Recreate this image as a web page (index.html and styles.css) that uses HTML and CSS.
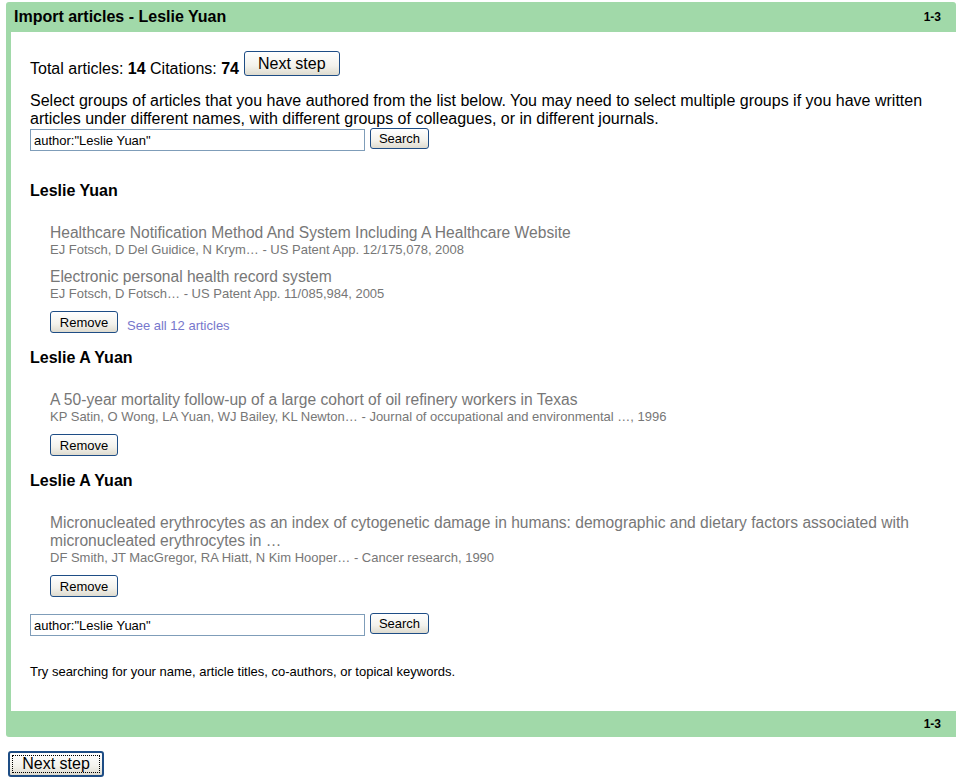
FILE: index.html
```html
<!DOCTYPE html>
<html lang="en">
<head>
    <meta charset="UTF-8">
    <title>Import articles - Leslie Yuan</title>
    <link rel="stylesheet" href="styles.css">
</head>
<body>
    <div class="panel">
        <div class="panel-bar panel-head">
            <span class="panel-title">Import articles - Leslie Yuan</span>
            <span class="panel-range">1-3</span>
        </div>

        <div class="panel-body">
            <div class="totals">
                <span>Total articles: <b>14</b> Citations: <b>74</b></span>
                <button class="btn btn-big">Next step</button>
            </div>

            <p class="intro">Select groups of articles that you have authored from the list below. You may need to select multiple groups if you have written articles under different names, with different groups of colleagues, or in different journals.</p>

            <form class="search">
                <input type="text" value='author:"Leslie Yuan"'>
                <button type="button" class="btn">Search</button>
            </form>

            <div class="group group-first">
                <h3>Leslie Yuan</h3>
                <div class="article">
                    <div class="art-title">Healthcare Notification Method And System Including A Healthcare Website</div>
                    <div class="art-meta">EJ Fotsch, D Del Guidice, N Krym&hellip; - US Patent App. 12/175,078, 2008</div>
                </div>
                <div class="article">
                    <div class="art-title">Electronic personal health record system</div>
                    <div class="art-meta">EJ Fotsch, D Fotsch&hellip; - US Patent App. 11/085,984, 2005</div>
                </div>
                <div class="group-actions">
                    <button class="btn">Remove</button>
                    <a href="#" class="see-all">See all 12 articles</a>
                </div>
            </div>

            <div class="group">
                <h3>Leslie A Yuan</h3>
                <div class="article">
                    <div class="art-title">A 50-year mortality follow-up of a large cohort of oil refinery workers in Texas</div>
                    <div class="art-meta">KP Satin, O Wong, LA Yuan, WJ Bailey, KL Newton&hellip; - Journal of occupational and environmental &hellip;, 1996</div>
                </div>
                <div class="group-actions">
                    <button class="btn">Remove</button>
                </div>
            </div>

            <div class="group">
                <h3>Leslie A Yuan</h3>
                <div class="article">
                    <div class="art-title">Micronucleated erythrocytes as an index of cytogenetic damage in humans: demographic and dietary factors associated with micronucleated erythrocytes in &hellip;</div>
                    <div class="art-meta">DF Smith, JT MacGregor, RA Hiatt, N Kim Hooper&hellip; - Cancer research, 1990</div>
                </div>
                <div class="group-actions">
                    <button class="btn">Remove</button>
                </div>
            </div>

            <form class="search search-bottom">
                <input type="text" value='author:"Leslie Yuan"'>
                <button type="button" class="btn">Search</button>
            </form>

            <p class="hint">Try searching for your name, article titles, co-authors, or topical keywords.</p>
        </div>

        <div class="panel-bar panel-foot">
            <span class="panel-range">1-3</span>
        </div>
    </div>

    <button class="btn btn-big btn-default">Next step</button>
</body>
</html>
```

FILE: styles.css
```css
body {
    margin: 2px 20px 0 6px;
    font-family: "Liberation Sans", Arial, sans-serif;
    font-size: 16px;
    color: #000;
    background: #fff;
}

.panel {
    width: 950px;
}

.panel-bar {
    background: #a1d9a9;
    display: flex;
    align-items: center;
    justify-content: space-between;
    padding: 0 15px 0 8px;
}

.panel-head {
    height: 30px;
    border-radius: 3px 3px 0 0;
}

.panel-foot {
    height: 26px;
    justify-content: flex-end;
    border-radius: 0 0 0 3px;
}

.panel-title {
    font-weight: bold;
    font-size: 16px;
}

.panel-range {
    font-weight: bold;
    font-size: 12px;
}

.panel-body {
    border-left: 5px solid #a1d9a9;
    padding: 19px 20px 31px 19px;
}

.btn {
    font-family: "Liberation Sans", Arial, sans-serif;
    font-size: 13px;
    color: #000;
    height: 21px;
    padding: 0 7px;
    border: 1px solid #1e4d85;
    border-radius: 3px;
    background: linear-gradient(#ffffff, #f3f2ec 60%, #dedbcf);
    white-space: nowrap;
    cursor: pointer;
}

.btn-big {
    font-size: 16px;
    height: 25px;
    padding: 0 13px;
}

.btn-default {
    margin-left: 2px;
    margin-top: 14px;
    height: 26px;
    width: 96px;
    padding: 0;
    border-width: 2px;
    outline: 1px dotted #000;
    outline-offset: -5px;
}

.totals {
    display: flex;
    align-items: flex-end;
    gap: 5px;
}

.totals span {
    line-height: 18px;
    margin-bottom: -2px;
}

.intro {
    margin: 16px 0 0;
    line-height: 18px;
}

.search {
    display: flex;
    align-items: flex-start;
    gap: 5px;
    margin-top: 1px;
}

.search input {
    width: 335px;
    height: 22px;
    box-sizing: border-box;
    border: 1px solid #7f9db9;
    padding: 0 3px;
    font-family: "Liberation Sans", Arial, sans-serif;
    font-size: 13px;
    margin: 0;
}

.search .btn {
    margin-top: -1px;
    width: 59px;
}

.search-bottom {
    margin-top: 17px;
}

.group {
    margin-top: 16px;
}

.group-first {
    margin-top: 31px;
}

.group h3 {
    margin: 0 0 24px;
    font-size: 16px;
    line-height: 18px;
}

.article {
    margin-left: 20px;
    color: #777;
}

.article + .article {
    margin-top: 10px;
}

.art-title {
    font-size: 15.6px;
    line-height: 18px;
}

.art-meta {
    font-size: 13px;
    line-height: 16px;
}

.group-actions {
    margin-left: 20px;
    margin-top: 9px;
    display: flex;
    align-items: flex-start;
    gap: 9px;
}

.group-actions .btn {
    height: 22px;
    width: 68px;
}

.see-all {
    color: #7777cc;
    font-size: 13px;
    line-height: 14px;
    text-decoration: none;
    margin-top: 8px;
}

.hint {
    margin: 28px 0 0;
    font-size: 13px;
    line-height: 16px;
}
```
